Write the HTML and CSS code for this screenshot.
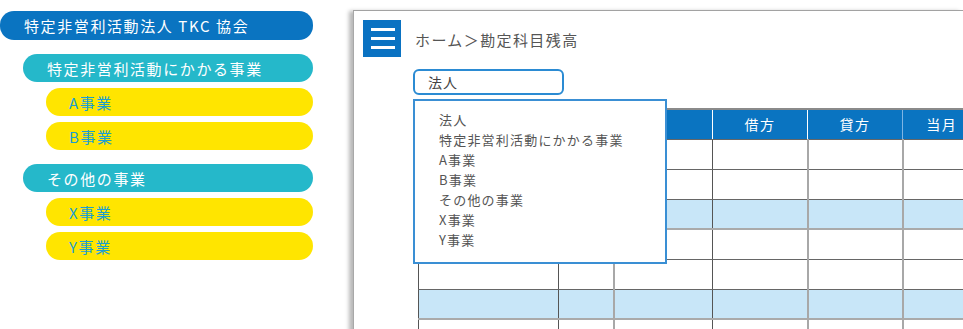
FILE: index.html
```html
<!DOCTYPE html>
<html lang="ja">
<head>
<meta charset="utf-8">
<link rel="stylesheet" href="styles.css">
</head>
<body>
<div class="page">
  <nav class="tree">
    <div class="pill pill-org">特定非営利活動法人 TKC 協会</div>
    <div class="pill pill-group gap-big">特定非営利活動にかかる事業</div>
    <div class="pill pill-item">A事業</div>
    <div class="pill pill-item">B事業</div>
    <div class="pill pill-group gap-big">その他の事業</div>
    <div class="pill pill-item">X事業</div>
    <div class="pill pill-item">Y事業</div>
  </nav>

  <section class="window">
    <header class="win-head">
      <div class="burger">
        <svg width="38" height="37" viewBox="0 0 38 37">
          <rect width="38" height="37" fill="#0a72c2"/>
          <rect x="8" y="8" width="24" height="3" fill="#fff"/>
          <rect x="8" y="17" width="24" height="3" fill="#fff"/>
          <rect x="8" y="26" width="24" height="3" fill="#fff"/>
        </svg>
      </div>
      <div class="crumb">ホーム＞勘定科目残高</div>
    </header>

    <div class="content">
      <div class="select-wrap">
        <div class="select">法人</div>
        <ul class="dropdown">
          <li>法人</li>
          <li>特定非営利活動にかかる事業</li>
          <li>A事業</li>
          <li>B事業</li>
          <li>その他の事業</li>
          <li>X事業</li>
          <li>Y事業</li>
        </ul>
      </div>

      <table class="grid">
        <colgroup>
          <col class="c1"><col class="c2"><col class="c3"><col class="c4"><col class="c5"><col class="c6">
        </colgroup>
        <thead>
          <tr><th></th><th></th><th></th><th>借方</th><th>貸方</th><th>当月</th></tr>
        </thead>
        <tbody>
          <tr><td></td><td></td><td></td><td></td><td></td><td></td></tr>
          <tr><td></td><td></td><td></td><td></td><td></td><td></td></tr>
          <tr class="hl"><td></td><td></td><td></td><td></td><td></td><td></td></tr>
          <tr><td></td><td></td><td></td><td></td><td></td><td></td></tr>
          <tr><td></td><td></td><td></td><td></td><td></td><td></td></tr>
          <tr class="hl"><td></td><td></td><td></td><td></td><td></td><td></td></tr>
          <tr><td></td><td></td><td></td><td></td><td></td><td></td></tr>
        </tbody>
      </table>
    </div>
  </section>
</div>
</body>
</html>
```

FILE: styles.css
```css
* { box-sizing: border-box; }
html, body {
  margin: 0;
  padding: 0;
  background: #fff;
  overflow: hidden;
}
body {
  font-family: "Noto Sans CJK JP", "Noto Sans", sans-serif;
  width: 963px;
  height: 329px;
}
.page {
  display: flex;
  align-items: flex-start;
  height: 329px;
}

/* left tree */
.tree {
  width: 313px;
  flex: none;
  display: flex;
  flex-direction: column;
  align-items: flex-end;
  gap: 6px;
  padding-top: 11px;
}
.pill {
  height: 28px;
  border-radius: 14px;
  display: flex;
  align-items: center;
  font-size: 15px;
  letter-spacing: 1.6px;
  line-height: 1;
  white-space: nowrap;
}
.pill-org {
  width: 313px;
  height: 29px;
  padding-left: 24px;
  background: #0a74c1;
  color: #fff;
}
.pill-group {
  width: 290px;
  padding-left: 24px;
  background: #25b8ca;
  color: #fff;
}
.gap-big { margin-top: 8px; }
.pill-item {
  width: 267px;
  padding-left: 23px;
  background: #ffe500;
  color: #1a9ed3;
}

/* window */
.window {
  margin-left: 40px;
  margin-top: 10px;
  flex: 1;
  height: 330px;
  border-top: 1px solid #a2a2a2;
  border-left: 1px solid #a8a8a8;
  box-shadow: -4px 1px 4px rgba(0,0,0,0.28);
  overflow: hidden;
  background: #fff;
}
.win-head {
  display: flex;
  align-items: center;
  padding: 9px 0 0 9px;
  gap: 14px;
}
.burger { width: 38px; height: 37px; display: flex; }
.crumb {
  color: #555;
  font-size: 15px;
  letter-spacing: 1.4px;
  padding-top: 2px;
}
.content {
  padding-left: 59px;
  padding-top: 12px;
}
.select-wrap {
  position: relative;
  width: 151px;
}
.select {
  height: 26px;
  border: 2px solid #2b8bd3;
  border-radius: 6px;
  padding-left: 13px;
  font-size: 14px;
  color: #444;
  display: flex;
  align-items: center;
  letter-spacing: 1px;
}
.dropdown {
  position: absolute;
  left: 0;
  top: 30px;
  width: 254px;
  height: 165px;
  margin: 0;
  padding: 9px 0 0 24px;
  list-style: none;
  background: #fff;
  border: 2px solid #3a8fd4;
  z-index: 2;
}
.dropdown li {
  height: 20px;
  line-height: 20px;
  font-size: 13px;
  letter-spacing: 1.2px;
  color: #555;
  white-space: nowrap;
}

/* table */
.grid {
  margin-left: 5px;
  margin-top: 13px;
  border-collapse: collapse;
  table-layout: fixed;
  width: 562px;
}
.c1 { width: 140px; }
.c2 { width: 55px; }
.c3 { width: 99px; }
.c4 { width: 95px; }
.c5 { width: 95px; }
.c6 { width: 78px; }
.grid th {
  height: 30px;
  background: #0a74c1;
  color: #fff;
  font-weight: normal;
  font-size: 14px;
  letter-spacing: 1.5px;
  text-align: center;
  border-top: 2px solid #8a8a8a;
  border-bottom: 1px solid #666;
  border-left: 1px solid #fff;
  padding: 0;
}
.grid th:first-child { border-left: 1px solid #666; }
.grid th:last-child { border-left-color: #7fb5e4; }
.grid td {
  height: 30px;
  padding: 0;
  border-bottom: 1px solid #666;
  border-left: 1px solid #555;
}
.grid td:nth-child(3),
.grid td:nth-child(5),
.grid td:nth-child(6) { border-left: 2px solid #a8a8a8; }
.grid tr.hl td {
  background: #c8e6f8;
  border-bottom: 2px solid #aaa;
}
```
